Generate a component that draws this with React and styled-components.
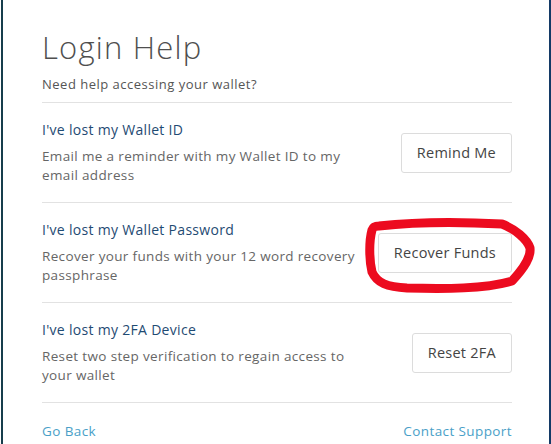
import React from "react";
import styled, { createGlobalStyle } from "styled-components";

const Global = createGlobalStyle`
  html, body { margin: 0; padding: 0; background: #ffffff; }
  body { font-family: "Open Sans", "Liberation Sans", sans-serif; }
  * { box-sizing: border-box; }
`;

const Page = styled.div`
  width: 551px;
  height: 444px;
  padding-left: 1px;
  overflow: hidden;
  background: #fff;
`;

const Panel = styled.div`
  width: 550px;
  height: 444px;
  border-left: 2px solid #173e4c;
  border-right: 2px solid #143a66;
  padding: 29px 37px 0 39px;
  background: #fff;
`;

const Title = styled.h1`
  margin: 0;
  font-family: "Open Sans", sans-serif;
  font-weight: 300;
  font-size: 31px;
  letter-spacing: 1.2px;
  line-height: 37px;
  color: #4f4f4f;
`;

const Subtitle = styled.p`
  margin: 9px 0 0;
  font-size: 13px;
  letter-spacing: 0.5px;
  line-height: 18px;
  color: #555;
  padding-bottom: 9px;
  border-bottom: 1px solid #e2e2e2;
`;

const Row = styled.div`
  position: relative;
  display: flex;
  align-items: center;
  justify-content: space-between;
  height: 100px;
  border-bottom: 1px solid #e2e2e2;
`;

const Info = styled.div`
  display: flex;
  flex-direction: column;
  gap: 8px;
  width: 314px;
  flex-shrink: 0;
`;

const RowTitle = styled.div`
  font-size: 14px;
  letter-spacing: 0.3px;
  line-height: 18px;
  color: #1f4b73;
`;

const RowDesc = styled.div`
  font-size: 13.5px;
  letter-spacing: 0.35px;
  line-height: 19px;
  color: #666;
`;

const Button = styled.button`
  height: 40px;
  padding: 0 15px;
  background: #fff;
  border: 1px solid #dcdcdc;
  border-radius: 3px;
  font-family: "Open Sans", sans-serif;
  font-size: 14.5px;
  letter-spacing: 0.25px;
  color: #444;
  cursor: pointer;
`;

const Scribble = styled.svg`
  position: absolute;
  left: 313px;
  top: 11px;
  width: 185px;
  height: 85px;
  overflow: visible;
  pointer-events: none;
`;

const Footer = styled.div`
  display: flex;
  justify-content: space-between;
  align-items: center;
  padding-top: 19px;
`;

const Link = styled.a`
  font-size: 13.5px;
  letter-spacing: 0.4px;
  line-height: 18px;
  color: #4a9fc8;
  text-decoration: none;
  cursor: pointer;
`;

const rows = [
  {
    title: "I've lost my Wallet ID",
    desc: "Email me a reminder with my Wallet ID to my email address",
    btn: "Remind Me",
  },
  {
    title: "I've lost my Wallet Password",
    desc: "Recover your funds with your 12 word recovery passphrase",
    btn: "Recover Funds",
    mark: true,
  },
  {
    title: "I've lost my 2FA Device",
    desc: "Reset two step verification to regain access to your wallet",
    btn: "Reset 2FA",
  },
];

export default function App() {
  return (
    <Page>
      <Global />
      <Panel>
        <Title>Login Help</Title>
        <Subtitle>Need help accessing your wallet?</Subtitle>
        {rows.map((r) => (
          <Row key={r.btn}>
            <Info>
              <RowTitle>{r.title}</RowTitle>
              <RowDesc>{r.desc}</RowDesc>
            </Info>
            <Button>{r.btn}</Button>
            {r.mark && (
              <Scribble viewBox="0 0 185 85">
                <path
                  d="M24 12 C 60 8, 110 8, 147 10 C 160 15, 172 25, 175 34 C 176 43, 170 53, 157 67 C 130 75, 90 75, 52 74 C 32 73, 22 69, 17 58 C 14 45, 14 27, 17 16 C 18 13, 20 12, 24 12 Z"
                  fill="none"
                  stroke="#ec0b1f"
                  strokeWidth="9"
                  strokeLinejoin="round"
                  strokeLinecap="round"
                />
              </Scribble>
            )}
          </Row>
        ))}
        <Footer>
          <Link>Go Back</Link>
          <Link>Contact Support</Link>
        </Footer>
      </Panel>
    </Page>
  );
}
